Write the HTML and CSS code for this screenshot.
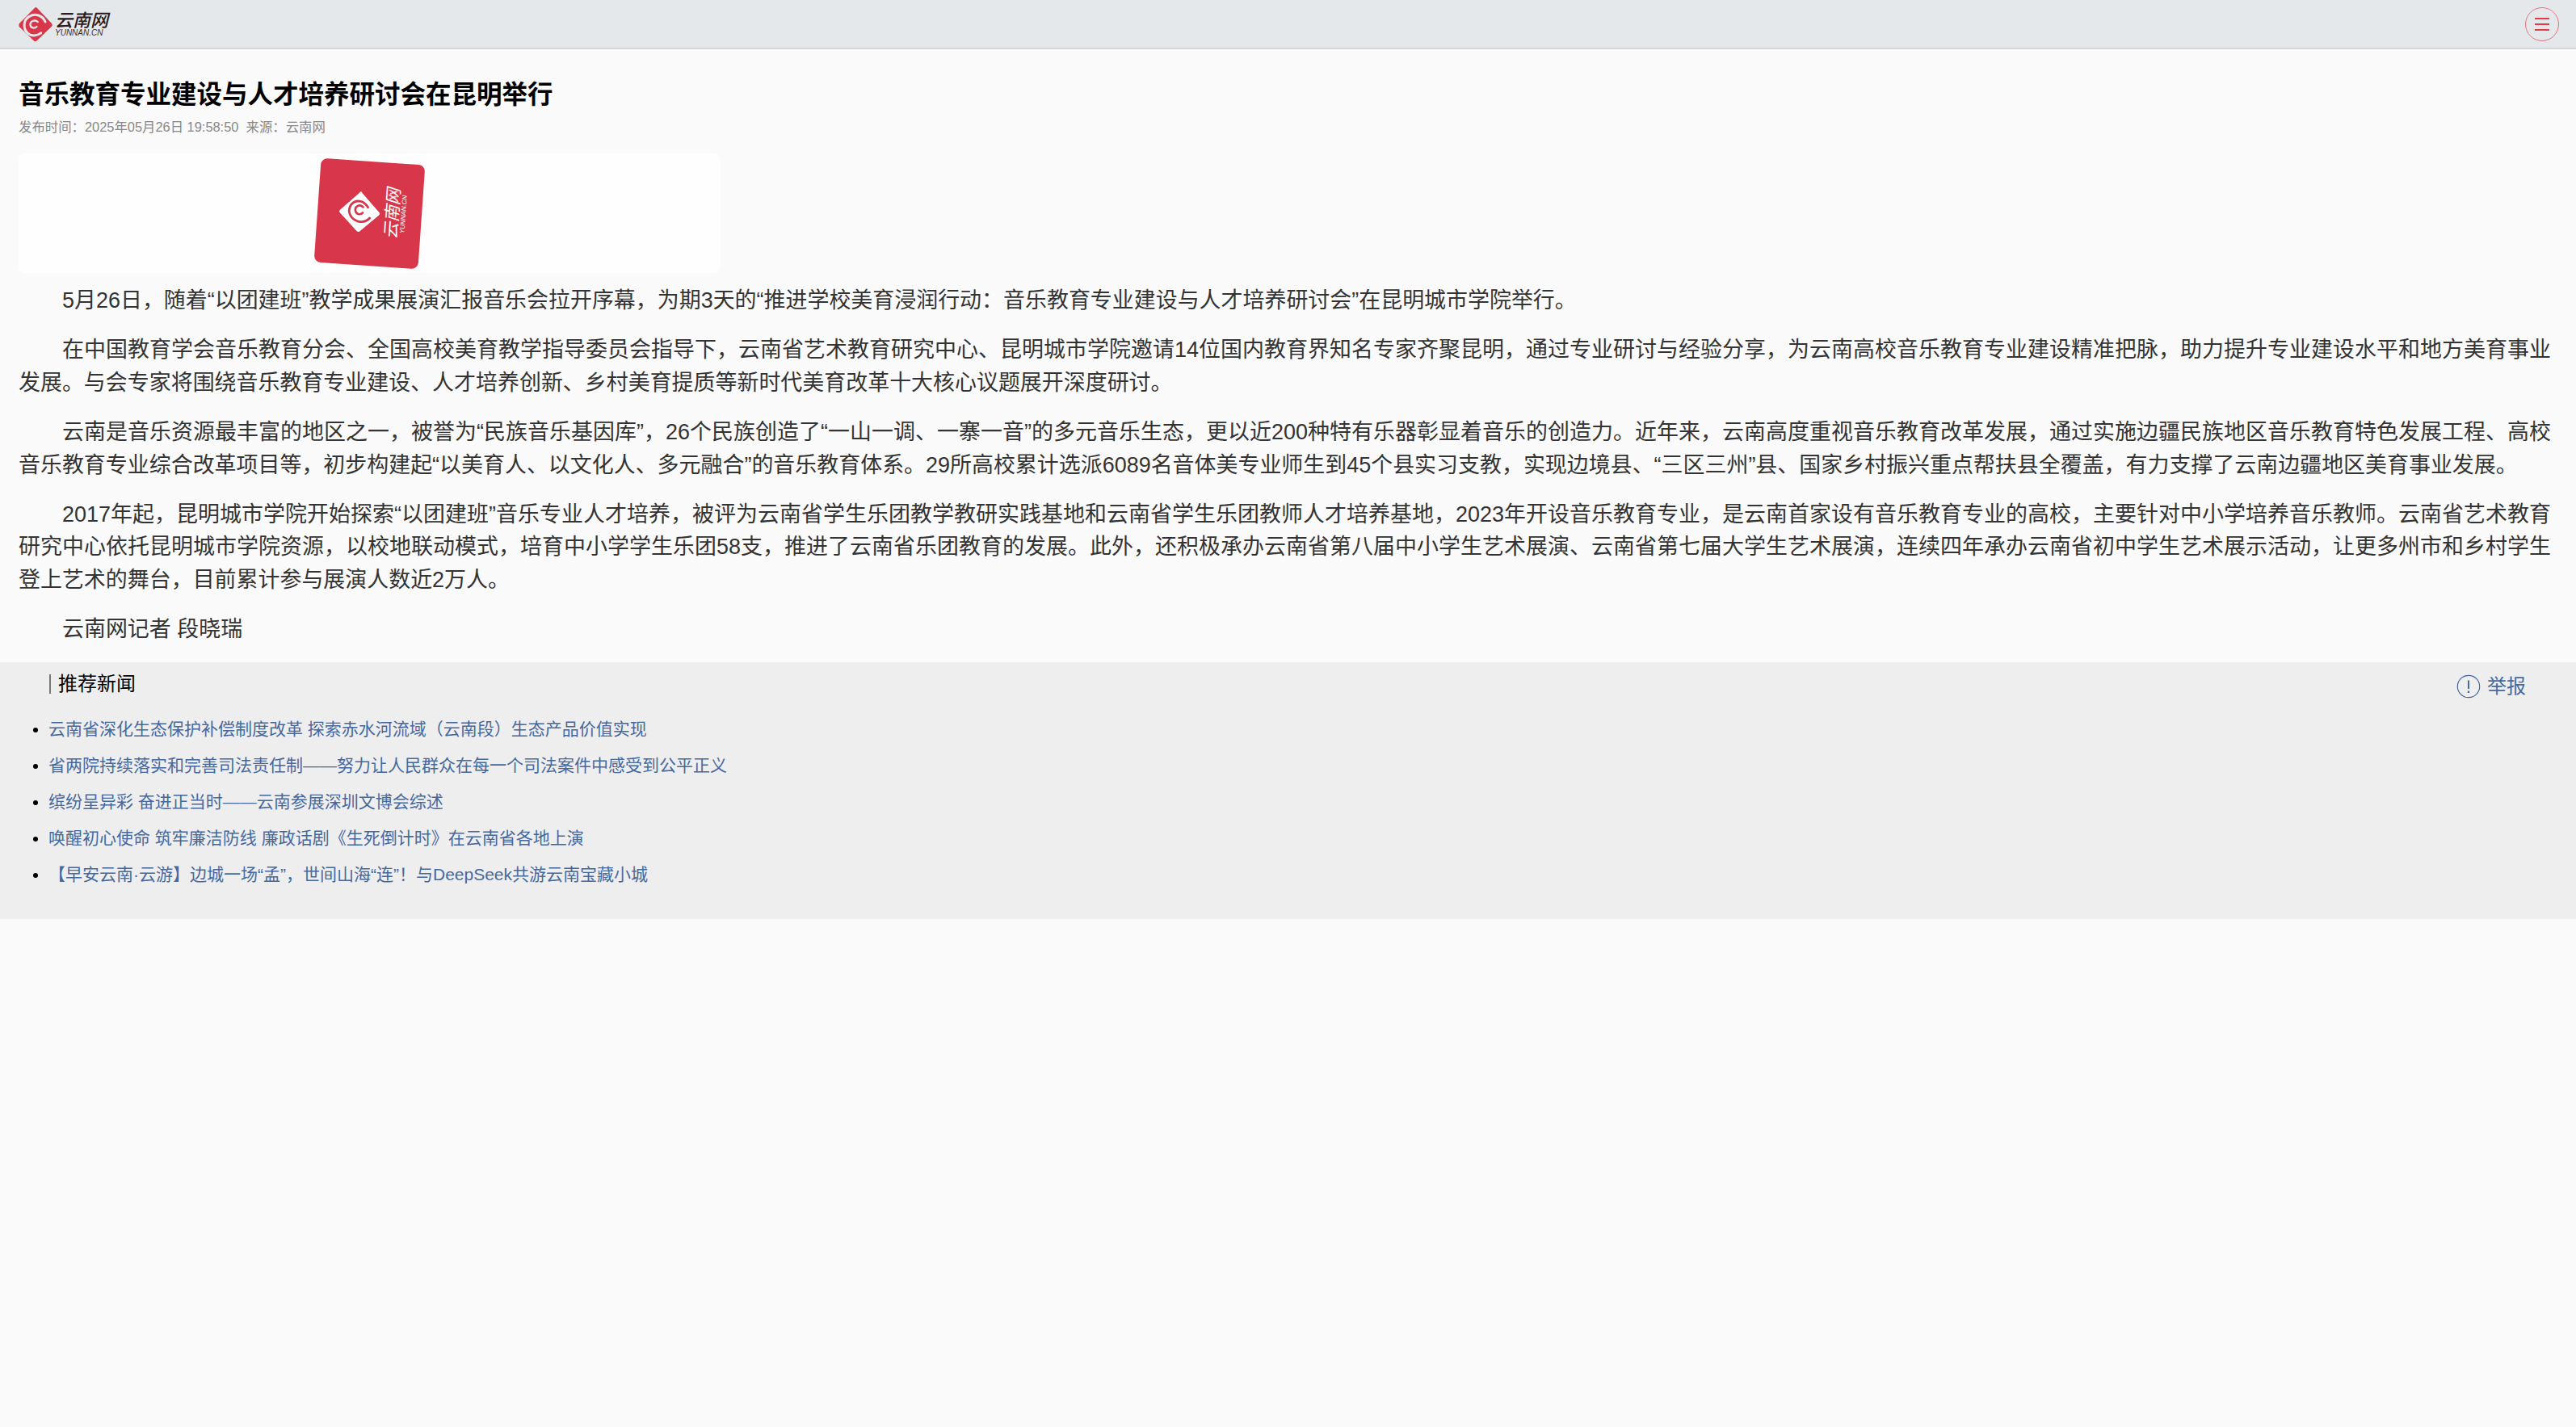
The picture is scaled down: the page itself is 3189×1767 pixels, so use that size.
FILE: index.html
```html
<!DOCTYPE html>
<html lang="zh-CN">
<head>
<meta charset="utf-8">
<title>音乐教育专业建设与人才培养研讨会在昆明举行</title>
<link rel="stylesheet" href="styles.css">
</head>
<body>
<header class="topbar">
  <a class="logo">
    <svg class="logo-mark" viewBox="68 22 127 130" width="42" height="44" aria-hidden="true">
      <path d="M130 24 Q133 22 136 25 L192 84 Q196 90 192 95 L136 149 Q130 153 125 149 L71 97 Q67 90 71 84Z" fill="#d8374a"/>
      <path d="M168 78 C158 54 130 44 108 58 C84 72 84 106 104 122 C116 132 136 132 152 120" fill="none" stroke="#e4e8eb" stroke-width="9" stroke-linecap="round"/>
      <path d="M140 78 C128 68 110 76 112 90 C114 102 128 104 136 96" fill="none" stroke="#e4e8eb" stroke-width="7" stroke-linecap="round"/>
    </svg>
    <span class="logo-text">
      <span class="logo-cn">云南网</span>
      <span class="logo-en">YUNNAN.CN</span>
    </span>
  </a>
  <button class="menu-btn" aria-label="菜单"><span></span><span></span><span></span></button>
</header>

<main class="article">
  <h1 class="title">音乐教育专业建设与人才培养研讨会在昆明举行</h1>
  <div class="meta">发布时间：2025年05月26日 19:58:50&nbsp;&nbsp;来源：云南网</div>
  <div class="banner">
    <div class="card">
      <svg class="card-mark" viewBox="0 0 52 52" width="52" height="52" aria-hidden="true">
        <path d="M26 1 Q27 1 28 3 L50 25 Q52 27 50 29 L28 50 Q26 52 24 50 L2 29 Q0 27 2 25 L24 3 Q25 1 26 1Z" fill="#fff"/>
        <path d="M36 20 C30 11 20 11 15 18 C10 26 15 36 25 38 C31 39 36 37 39 33" fill="none" stroke="#d8364a" stroke-width="2.8" stroke-linecap="round"/>
        <path d="M30 20 C25 16 19 20 21 26 C23 30 28 30 30 27" fill="none" stroke="#d8364a" stroke-width="2.6" stroke-linecap="round"/>
      </svg>
      <span class="card-text">
        <span class="card-label">
          <span class="card-cn">云南网</span>
          <span class="card-en">YUNNAN.CN</span>
        </span>
      </span>
    </div>
  </div>
  <p>5月26日，随着“以团建班”教学成果展演汇报音乐会拉开序幕，为期3天的“推进学校美育浸润行动：音乐教育专业建设与人才培养研讨会”在昆明城市学院举行。</p>
  <p>在中国教育学会音乐教育分会、全国高校美育教学指导委员会指导下，云南省艺术教育研究中心、昆明城市学院邀请14位国内教育界知名专家齐聚昆明，通过专业研讨与经验分享，为云南高校音乐教育专业建设精准把脉，助力提升专业建设水平和地方美育事业发展。与会专家将围绕音乐教育专业建设、人才培养创新、乡村美育提质等新时代美育改革十大核心议题展开深度研讨。</p>
  <p>云南是音乐资源最丰富的地区之一，被誉为“民族音乐基因库”，26个民族创造了“一山一调、一寨一音”的多元音乐生态，更以近200种特有乐器彰显着音乐的创造力。近年来，云南高度重视音乐教育改革发展，通过实施边疆民族地区音乐教育特色发展工程、高校音乐教育专业综合改革项目等，初步构建起“以美育人、以文化人、多元融合”的音乐教育体系。29所高校累计选派6089名音体美专业师生到45个县实习支教，实现边境县、“三区三州”县、国家乡村振兴重点帮扶县全覆盖，有力支撑了云南边疆地区美育事业发展。</p>
  <p>2017年起，昆明城市学院开始探索“以团建班”音乐专业人才培养，被评为云南省学生乐团教学教研实践基地和云南省学生乐团教师人才培养基地，2023年开设音乐教育专业，是云南首家设有音乐教育专业的高校，主要针对中小学培养音乐教师。云南省艺术教育研究中心依托昆明城市学院资源，以校地联动模式，培育中小学学生乐团58支，推进了云南省乐团教育的发展。此外，还积极承办云南省第八届中小学生艺术展演、云南省第七届大学生艺术展演，连续四年承办云南省初中学生艺术展示活动，让更多州市和乡村学生登上艺术的舞台，目前累计参与展演人数近2万人。</p>
  <p>云南网记者 段晓瑞</p>
</main>

<section class="recommend">
  <div class="rec-head">
    <h2 class="rec-title">推荐新闻</h2>
    <a class="report">
      <svg viewBox="0 0 30 30" width="30" height="30" aria-hidden="true">
        <circle cx="15" cy="15" r="13.7" fill="none" stroke="#45699f" stroke-width="1.2"/>
        <path d="M15 7.5 V18" stroke="#45699f" stroke-width="2"/>
        <path d="M15 20.5 V23" stroke="#45699f" stroke-width="2.2"/>
      </svg>
      <span>举报</span>
    </a>
  </div>
  <ul class="rec-list">
    <li><a>云南省深化生态保护补偿制度改革 探索赤水河流域（云南段）生态产品价值实现</a></li>
    <li><a>省两院持续落实和完善司法责任制——努力让人民群众在每一个司法案件中感受到公平正义</a></li>
    <li><a>缤纷呈异彩 奋进正当时——云南参展深圳文博会综述</a></li>
    <li><a>唤醒初心使命 筑牢廉洁防线 廉政话剧《生死倒计时》在云南省各地上演</a></li>
    <li><a>【早安云南·云游】边城一场“孟”，世间山海“连”！与DeepSeek共游云南宝藏小城</a></li>
  </ul>
</section>
</body>
</html>
```

FILE: styles.css
```css
* { box-sizing: border-box; }
html, body { margin: 0; padding: 0; }
body {
  min-height: 1767px;
  background: #fafafa;
  color: #333;
  font-family: "Liberation Sans", "Noto Sans CJK SC", sans-serif;
}
.topbar {
  height: 61px;
  background: #e4e8eb;
  border-bottom: 2px solid #d4d6d8;
  display: flex;
  align-items: center;
  justify-content: space-between;
  padding: 0 21px 0 23px;
}
.logo { display: flex; align-items: center; gap: 3px; }
.logo-mark { display: block; }
.logo-text { display: flex; flex-direction: column; width: 67px; padding-top: 3px; }
.logo-cn { font-size: 22px; line-height: 20px; font-style: italic; font-weight: 500; color: #2c1a1c; }
.logo-en { font-size: 10px; line-height: 10px; font-style: italic; color: #3a2a2c; white-space: nowrap; }
.menu-btn {
  width: 42px; height: 42px; padding: 0;
  border: 1px solid #e87480;
  border-radius: 50%;
  background: transparent;
  display: flex; flex-direction: column; align-items: center; justify-content: center; gap: 5px;
}
.menu-btn span { display: block; width: 18px; height: 2px; background: #e23d47; }
.article { padding: 36px 31px 0 23px; }
.title { margin: 0; font-size: 31.5px; line-height: 40px; font-weight: 700; color: #000; }
.meta { margin-top: 9px; font-size: 16.4px; line-height: 22px; color: #888; }
.banner {
  width: 869px; height: 148px; margin: 22px 0 14px;
  background: #fefefe;
  border-radius: 8px;
  display: flex; justify-content: center; align-items: center;
}
.card {
  width: 129px; height: 129px;
  background: #d8364a;
  border-radius: 8px;
  transform: rotate(4deg);
  display: flex; align-items: center; justify-content: center; gap: 3px;
  padding: 0 0 4px 8px;
}
.card-mark { display: block; flex: none; }
.card-text { display: flex; align-items: center; justify-content: center; width: 30px; height: 64px; flex: none; }
.card-label { display: flex; flex-direction: column; flex: none; align-items: center; transform: rotate(-90deg); }
.card-cn { white-space: nowrap; font-size: 21px; line-height: 21px; color: #fff; font-style: italic; }
.card-en { white-space: nowrap; font-size: 8px; line-height: 8px; color: #fff; font-style: italic; }
.article p {
  margin: 0 0 20.75px;
  font-size: 26.96px;
  line-height: 40.5px;
  text-indent: 54px;
  text-align: justify;
  color: #333;
}
.article p:last-child { margin-bottom: 20px; }
.recommend { background: #eee; height: 318px; padding: 0 62px 0 38px; }
.rec-head { display: flex; justify-content: space-between; align-items: flex-start; }
.rec-title {
  margin: 15px 0 0 23px;
  padding-left: 9px;
  border-left: 2px solid #777;
  font-size: 24px; line-height: 24px; font-weight: 400; color: #000;
}
.report { display: flex; align-items: center; gap: 8px; margin-top: 15px; color: #45699f; font-size: 24px; line-height: 30px; }
.report svg { display: block; }
.rec-list { margin: 15px 0 0; padding: 0 0 0 22px; }
.rec-list li { font-size: 21px; line-height: 45px; color: #000; }
.rec-list a { color: #45699f; }
```
